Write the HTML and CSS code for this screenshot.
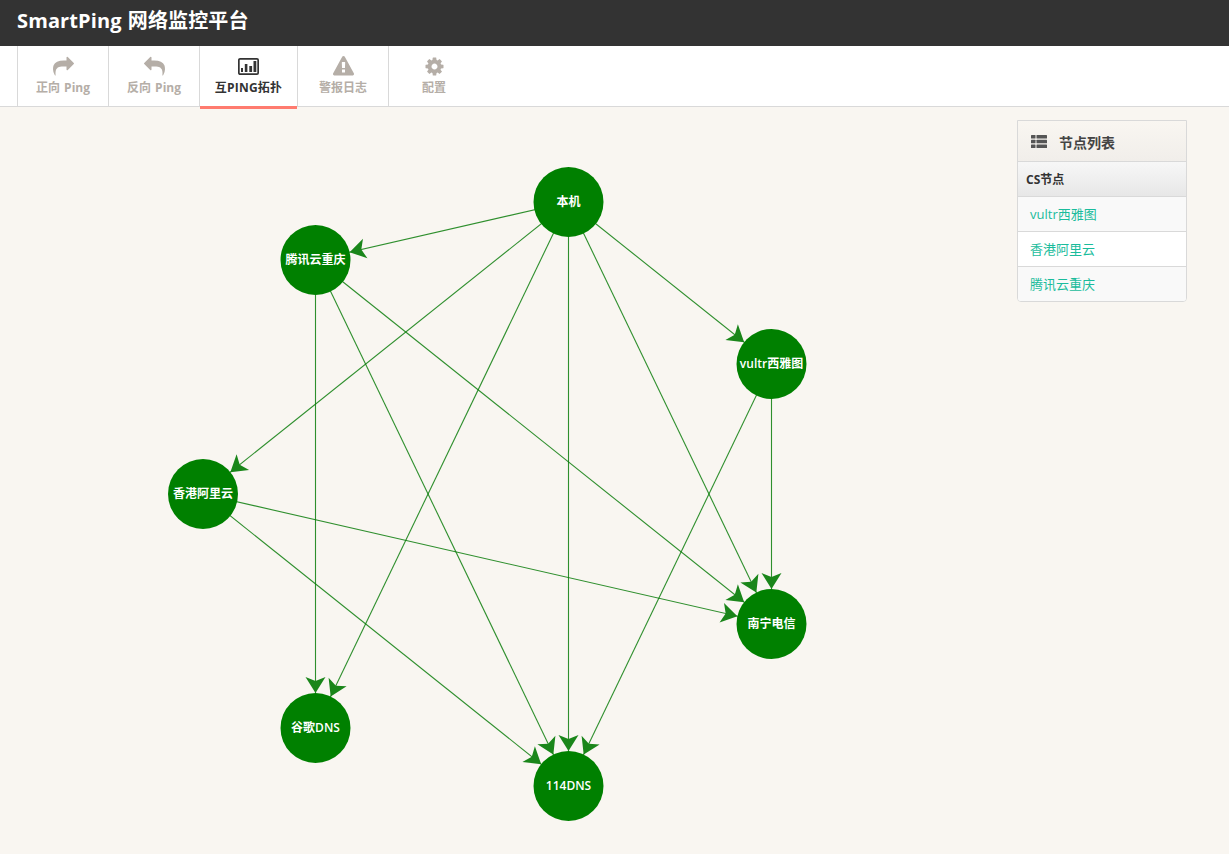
FILE: index.html
```html
<!DOCTYPE html>
<html lang="zh-CN">
<head>
<meta charset="utf-8">
<title>SmartPing 网络监控平台</title>
<link rel="stylesheet" href="styles.css">
</head>
<body>
<header class="topbar"><h1 class="brand">SmartPing 网络监控平台</h1></header>
<nav class="tabs">
  <a class="tab">
    <svg class="tab-icon" viewBox="0 0 1792 1792"><path d="M1792 640q0 26-19 45l-512 512q-19 19-45 19t-45-19-19-45v-256h-224q-98 0-175.5 6t-154 21.5-133 42.5-105.5 69.5-80 101-48.5 138.5-17.5 181q0 55 5 123 0 6 2.5 23.5t2.5 26.5q0 15-8.5 25t-23.5 10q-16 0-28-17-7-9-13-22t-13.5-30-10.5-24q-127-285-127-451 0-199 53-333 162-403 875-403h224v-256q0-26 19-45t45-19 45 19l512 512q19 19 19 45z"/></svg>
    <span>正向 Ping</span>
  </a>
  <a class="tab">
    <svg class="tab-icon flip" viewBox="0 0 1792 1792"><path d="M1792 640q0 26-19 45l-512 512q-19 19-45 19t-45-19-19-45v-256h-224q-98 0-175.5 6t-154 21.5-133 42.5-105.5 69.5-80 101-48.5 138.5-17.5 181q0 55 5 123 0 6 2.5 23.5t2.5 26.5q0 15-8.5 25t-23.5 10q-16 0-28-17-7-9-13-22t-13.5-30-10.5-24q-127-285-127-451 0-199 53-333 162-403 875-403h224v-256q0-26 19-45t45-19 45 19l512 512q19 19 19 45z"/></svg>
    <span>反向 Ping</span>
  </a>
  <a class="tab tab-active">
    <svg class="chart-icon" viewBox="0 0 21 17"><rect class="chart-frame" x=".85" y=".85" width="19.3" height="15.3" rx="1.2"/><rect x="3" y="10" width="2" height="4"/><rect x="6.8" y="6" width="2.6" height="8"/><rect x="11.3" y="8" width="2.8" height="6"/><rect x="15.5" y="3" width="2.8" height="11"/></svg>
    <span>互PING拓扑</span>
  </a>
  <a class="tab">
    <svg class="tab-icon" viewBox="0 0 1792 1792"><path d="M1024 1375v-190q0-14-9.500-23.500t-22.500-9.500h-192q-13 0-22.500 9.500t-9.500 23.500v190q0 14 9.500 23.500t22.500 9.500h192q13 0 22.500-9.500t9.500-23.500zm-2-374l18-459q0-12-10-19-13-11-24-11h-220q-11 0-24 11-10 7-10 21l17 457q0 10 10 16.500t24 6.500h185q14 0 23.500-6.500t10.500-16.500zm-14-934l768 1408q35 63-2 126-17 29-46.500 46t-63.500 17h-1536q-34 0-63.500-17t-46.500-46q-37-63-2-126l768-1408q17-31 47-49t65-18 65 18 47 49z"/></svg>
    <span>警报日志</span>
  </a>
  <a class="tab">
    <svg class="tab-icon" viewBox="0 0 1792 1792"><path d="M1152 896q0-106-75-181t-181-75-181 75-75 181 75 181 181 75 181-75 75-181zm512-109v222q0 12-8 23t-20 13l-185 28q-19 54-39 91 35 50 107 138 10 12 10 25t-9 23q-27 37-99 108t-94 71q-12 0-26-9l-138-108q-44 23-91 38-16 136-29 186-7 28-36 28h-222q-14 0-24.500-8.500t-11.500-21.500l-28-184q-49-16-90-37l-141 107q-10 9-25 9-14 0-25-11-126-114-165-168-7-10-7-23 0-12 8-23 15-21 51-66.500t54-70.500q-27-50-41-99l-183-27q-13-2-21-12.500t-8-23.500v-222q0-12 8-23t19-13l186-28q14-46 39-92-40-57-107-138-10-12-10-24 0-10 9-23 26-36 98.500-107.500t94.500-71.500q13 0 26 10l138 107q44-23 91-38 16-136 29-186 7-28 36-28h222q14 0 24.500 8.500t11.500 21.500l28 184q49 16 90 37l142-107q9-9 24-9 13 0 25 10 129 119 165 170 7 8 7 22 0 12-8 23-15 21-51 66.500t-54 70.500q26 50 41 98l183 28q13 2 21 12.500t8 23.500z"/></svg>
    <span>配置</span>
  </a>
</nav>
<main class="content">
  <svg class="topology" viewBox="0 0 1000 747" width="1000" height="747">
    <defs>
      <marker id="arrow" markerUnits="userSpaceOnUse" markerWidth="60" markerHeight="24" refX="0" refY="0" viewBox="-60 -12 60 24" orient="auto">
        <path class="arrow-head" d="M-35 0L-51-10L-47 0L-51 10Z"/>
      </marker>
    </defs>
    <g class="edges">
      <line x1="568.500" y1="95" x2="315.500" y2="153"/>
      <line x1="568.500" y1="95" x2="771.500" y2="257"/>
      <line x1="568.500" y1="95" x2="203" y2="387"/>
      <line x1="568.500" y1="95" x2="315.500" y2="621"/>
      <line x1="568.500" y1="95" x2="568.500" y2="679"/>
      <line x1="568.500" y1="95" x2="771.500" y2="517"/>
      <line x1="315.500" y1="153" x2="315.500" y2="621"/>
      <line x1="315.500" y1="153" x2="568.500" y2="679"/>
      <line x1="315.500" y1="153" x2="771.500" y2="517"/>
      <line x1="771.500" y1="257" x2="771.500" y2="517"/>
      <line x1="771.500" y1="257" x2="568.500" y2="679"/>
      <line x1="203" y1="387" x2="771.500" y2="517"/>
      <line x1="203" y1="387" x2="568.500" y2="679"/>
    </g>
    <g class="nodes">
      <circle cx="568.500" cy="95" r="35"/><text x="568.500" y="94">本机</text>
      <circle cx="315.500" cy="153" r="35"/><text x="315.500" y="152">腾讯云重庆</text>
      <circle cx="771.500" cy="257" r="35"/><text x="771.500" y="256">vultr西雅图</text>
      <circle cx="203" cy="387" r="35"/><text x="203" y="386">香港阿里云</text>
      <circle cx="771.500" cy="517" r="35"/><text x="771.500" y="516">南宁电信</text>
      <circle cx="315.500" cy="621" r="35"/><text x="315.500" y="620">谷歌DNS</text>
      <circle cx="568.500" cy="679" r="35"/><text x="568.500" y="678">114DNS</text>
    </g>
  </svg>
  <aside class="panel">
    <div class="panel-head">
      <svg class="list-icon" viewBox="0 0 16 13"><rect width="4.500" height="3.500" rx=".5"/><rect x="5.500" width="10.500" height="3.500" rx=".5"/><rect y="4.700" width="4.500" height="3.500" rx=".5"/><rect x="5.500" y="4.700" width="10.500" height="3.500" rx=".5"/><rect y="9.400" width="4.500" height="3.500" rx=".5"/><rect x="5.500" y="9.400" width="10.500" height="3.500" rx=".5"/></svg>
      <span class="panel-title">节点列表</span>
    </div>
    <div class="panel-group">CS节点</div>
    <a class="panel-row">vultr西雅图</a>
    <a class="panel-row">香港阿里云</a>
    <a class="panel-row">腾讯云重庆</a>
  </aside>
</main>
</body>
</html>
```

FILE: styles.css
```css
* { box-sizing: border-box; }
html, body { margin: 0; height: 100%; }
body {
  background: #f9f6f1;
  font-family: "Open Sans", "Noto Sans CJK SC", sans-serif;
  overflow: hidden;
}
.topbar {
  height: 46px;
  background: #333;
  padding: 0 0 4px 17px;
  display: flex;
  align-items: center;
}
.brand {
  margin: 0;
  color: #fff;
  font-size: 20px;
  font-weight: 700;
  line-height: 42px;
  letter-spacing: .12px;
  word-spacing: .8px;
}
.tabs {
  display: flex;
  height: 61px;
  padding-left: 17px;
  background: #fff;
  border-bottom: 1px solid #d9d9d9;
}
.tab {
  position: relative;
  width: 91px;
  height: 60px;
  border-left: 1px solid #d9d9d9;
  display: flex;
  flex-direction: column;
  align-items: center;
  padding-top: 10px;
  color: #b5aea7;
  font-size: 12px;
  font-weight: 700;
  line-height: 16px;
  word-spacing: 1px;
}
.tab-icon { display: block; width: 21px; height: 21px; fill: #b5aea7; margin-bottom: 3px; }
.flip { transform: scaleX(-1); }
.tab-active {
  width: 98px;
  color: #333;
  letter-spacing: .2px;
}
.tab-active::after {
  content: "";
  position: absolute;
  left: 0;
  right: 0;
  bottom: -3px;
  height: 3px;
  background: #ff7b6f;
}
.chart-icon { display: block; width: 21px; height: 17px; margin: 2px 0 5px; fill: #333; }
.chart-frame { fill: none; stroke: #333; stroke-width: 1.7; }
.content {
  display: flex;
  justify-content: space-between;
  align-items: flex-start;
  padding-right: 42px;
}
.topology { display: block; flex: none; }
.edges line {
  stroke: #0a7d0a;
  stroke-opacity: .85;
  stroke-width: 1.1;
  marker-end: url(#arrow);
}
.arrow-head { fill: #1a861a; }
.nodes circle { fill: #008000; }
.nodes text {
  fill: #fff;
  font-size: 12px;
  font-weight: 600;
  text-anchor: middle;
  dominant-baseline: central;
}
.panel {
  width: 170px;
  margin-top: 13px;
  border: 1px solid #d9d9d9;
  border-radius: 0 0 4px 4px;
  background: #fff;
  font-size: 13px;
  overflow: hidden;
}
.panel-head {
  height: 41px;
  display: flex;
  align-items: center;
  padding-left: 13px;
  gap: 12px;
  color: #444;
  font-size: 14px;
  font-weight: 600;
  background: linear-gradient(#f9f6f1, #f1eeea);
  border-bottom: 1px solid #d9d9d9;
}
.panel-title { padding-top: 2px; }
.list-icon { width: 16px; height: 13px; fill: #555; }
.panel-group {
  height: 35px;
  padding-left: 8px;
  line-height: 36px;
  font-size: 12px;
  font-weight: 700;
  color: #333;
  background: linear-gradient(#f7f7f7, #e7e7e7);
  border-bottom: 1px solid #d9d9d9;
}
.panel-row {
  display: block;
  height: 35px;
  padding-left: 12px;
  line-height: 34px;
  color: #1abc9c;
  background: #f9f9f9;
  border-bottom: 1px solid #d9d9d9;
}
.panel-row:nth-child(even) { background: #fff; }
.panel-row:last-child { height: 34px; border-bottom: 0; }
```
